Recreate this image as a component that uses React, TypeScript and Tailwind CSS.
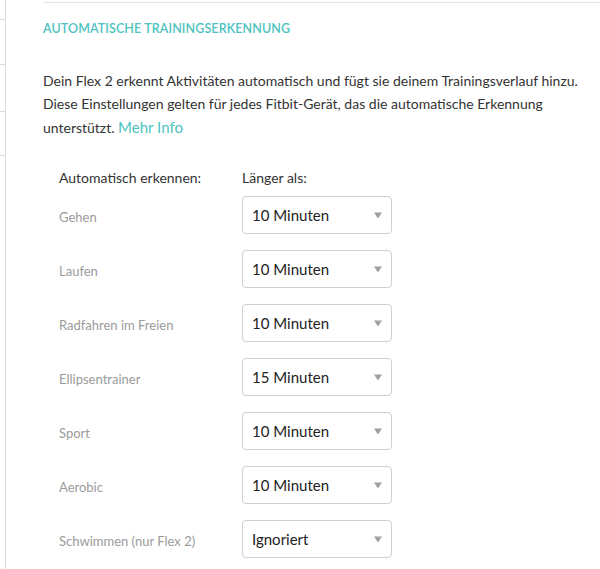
const rows = [
  { label: "Gehen", value: "10 Minuten" },
  { label: "Laufen", value: "10 Minuten" },
  { label: "Radfahren im Freien", value: "10 Minuten" },
  { label: "Ellipsentrainer", value: "15 Minuten" },
  { label: "Sport", value: "10 Minuten" },
  { label: "Aerobic", value: "10 Minuten" },
  { label: "Schwimmen (nur Flex 2)", value: "Ignoriert" },
];

function Select({ value }: { value: string }) {
  return (
    <div className="flex h-[38px] w-[150px] items-center justify-between rounded-[4px] border border-[#d0d0d0] bg-white pl-[9px] pr-[8px]">
      <span className="text-[15px] text-[#222]">{value}</span>
      <svg width="10" height="7" viewBox="0 0 10 7" className="mt-[1px]">
        <path d="M1 0.5 H9 L5 6.5 Z" fill="#a0a0a0" />
      </svg>
    </div>
  );
}

export default function App() {
  return (
    <div className="flex min-h-[569px] bg-white font-['Lato',sans-serif]">
      {/* sidebar edge */}
      <div className="w-[6px] shrink-0 border-r border-[#dcdcdc]">
        <div className="mt-[19px] border-t border-[#dcdcdc]" />
        <div className="mt-[44px] border-t border-[#dcdcdc]" />
        <div className="mt-[46px] border-t border-[#dcdcdc]" />
        <div className="mt-[43px] border-t border-[#dcdcdc]" />
      </div>

      <div className="flex-1 pl-[37px]">
        <div className="mt-[2px] border-t border-[#e4e4e4]" />
        <h3 className="mt-[17px] text-[12.5px] font-semibold tracking-[0.1px] text-[#4cc3c1]">
          AUTOMATISCHE TRAININGSERKENNUNG
        </h3>

        <p className="mt-[30px] text-[14px] leading-[23.5px] text-[#333]">
          Dein Flex 2 erkennt Aktivitäten automatisch und fügt sie deinem Trainingsverlauf hinzu.
          <br />
          Diese Einstellungen gelten für jedes Fitbit-Gerät, das die automatische Erkennung
          <br />
          unterstützt. <a className="text-[15px] text-[#4cc3c1]">Mehr Info</a>
        </p>

        <div className="mt-[28px] pl-[16px]">
          <div className="flex text-[14px] text-[#333]">
            <span className="w-[183px]">Automatisch erkennen:</span>
            <span>Länger als:</span>
          </div>
          <div className="mt-[8px] flex flex-col gap-[16px]">
            {rows.map((r, i) => (
              <div key={i} className="flex items-center">
                <span className="w-[183px] pt-[4px] text-[13px] text-[#9b9b9b]">{r.label}</span>
                <Select value={r.value} />
              </div>
            ))}
          </div>
        </div>
      </div>
    </div>
  );
}
